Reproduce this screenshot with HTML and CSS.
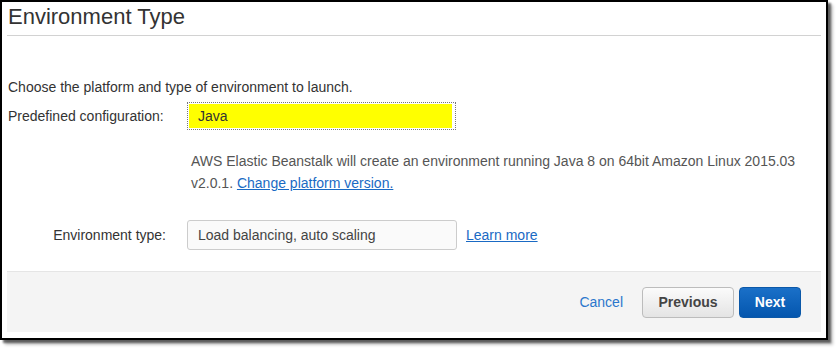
FILE: index.html
```html
<!DOCTYPE html>
<html lang="en">
<head>
    <meta charset="UTF-8">
    <title>Environment Type</title>
    <link rel="stylesheet" href="styles.css">
</head>
<body>
    <div class="frame">
        <div class="panel">
            <h1 class="title">Environment Type</h1>

            <p class="intro">Choose the platform and type of environment to launch.</p>

            <div class="row row-config">
                <label class="label label-left">Predefined configuration:</label>
                <div class="select-focus">
                    <div class="select-value">Java</div>
                </div>
            </div>

            <p class="help">
                AWS Elastic Beanstalk will create an environment running Java 8 on 64bit Amazon Linux 2015.03
                v2.0.1. <a href="#" class="link">Change platform version.</a>
            </p>

            <div class="row row-type">
                <label class="label label-right">Environment type:</label>
                <div class="field">Load balancing, auto scaling</div>
                <a href="#" class="link learn">Learn more</a>
            </div>
        </div>

        <div class="footer">
            <a href="#" class="cancel">Cancel</a>
            <button class="btn btn-prev">Previous</button>
            <button class="btn btn-next">Next</button>
        </div>
    </div>
</body>
</html>
```

FILE: styles.css
```css
* {
    margin: 0;
    padding: 0;
    box-sizing: border-box;
}

body {
    font-family: "Liberation Sans", Arial, sans-serif;
    background: #fff;
    color: #333;
    width: 838px;
    height: 350px;
    overflow: hidden;
}

.frame {
    width: 828px;
    height: 340px;
    border: 2px solid #000;
    background: #fff;
    box-shadow: 3px 3px 2px rgba(0, 0, 0, 0.55), 5px 5px 3px rgba(0, 0, 0, 0.2);
    display: flex;
    flex-direction: column;
    padding: 0 5px;
}

.panel {
    flex: 1;
}

.title {
    font-size: 22px;
    font-weight: normal;
    line-height: 26px;
    color: #333;
    padding: 2px 0 0 1px;
    height: 34px;
    border-bottom: 1px solid #d2d2d2;
}

.intro {
    font-size: 14px;
    line-height: 18px;
    margin-top: 42px;
    padding-left: 1px;
}

.row {
    display: flex;
    align-items: center;
}

.row-config {
    margin-top: 6px;
}

.label {
    width: 180px;
    font-size: 14px;
    color: #333;
}

.label-left {
    padding-left: 1px;
}

.label-right {
    text-align: right;
    padding-right: 21px;
}

.select-focus {
    width: 269px;
    height: 28px;
    border: 1px dotted #777;
    padding: 1px 3px 1px 1px;
    background: #fff;
}

.select-value {
    height: 100%;
    background: #ffff00;
    font-size: 14px;
    line-height: 24px;
    padding-left: 9px;
    color: #333;
}

.help {
    margin: 20px 0 0 184px;
    font-size: 14px;
    line-height: 22px;
    color: #555;
    width: 630px;
}

.link {
    color: #1a6ac4;
    text-decoration: underline;
}

.row-type {
    margin-top: 26px;
}

.field {
    width: 270px;
    height: 30px;
    border: 1px solid #ccc;
    border-radius: 3px;
    background: #fafafa;
    font-size: 14px;
    line-height: 28px;
    padding-left: 10px;
    color: #444;
}

.learn {
    margin-left: 9px;
    font-size: 14px;
}

.footer {
    height: 61px;
    margin-bottom: 6px;
    background: #f4f4f4;
    border-top: 1px solid #e5e5e5;
    display: flex;
    align-items: center;
    justify-content: flex-end;
    padding-right: 20px;
}

.cancel {
    font-size: 14px;
    color: #2b77cc;
    text-decoration: none;
    margin-right: 19px;
}

.btn {
    height: 31px;
    font-family: "Liberation Sans", Arial, sans-serif;
    font-size: 14px;
    font-weight: bold;
    border-radius: 4px;
    cursor: pointer;
}

.btn-prev {
    width: 92px;
    color: #444;
    background: linear-gradient(#fbfbfb, #e4e4e4);
    border: 1px solid #bcbcbc;
    margin-right: 5px;
}

.btn-next {
    width: 62px;
    color: #fff;
    background: linear-gradient(#1a70c8, #0456ae);
    border: 1px solid #0b58a8;
}
```
